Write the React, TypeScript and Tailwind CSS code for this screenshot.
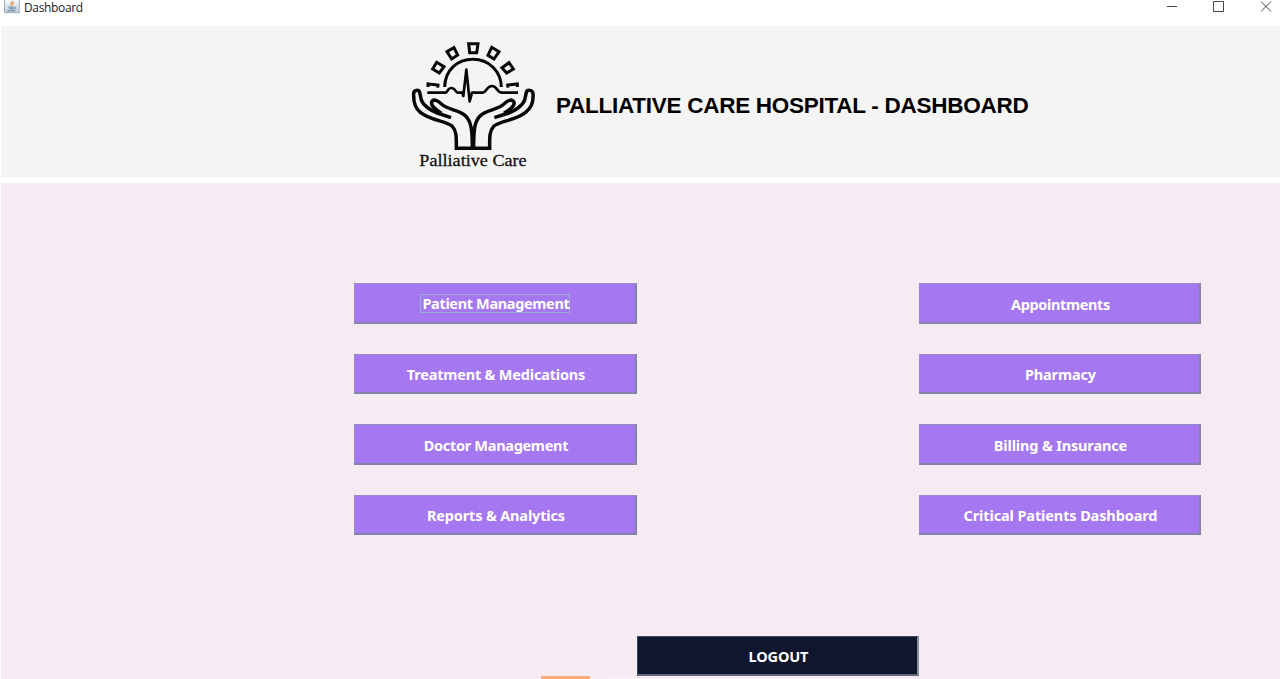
import React from "react";

function JavaIcon() {
  return (
    <svg width="17" height="17" viewBox="0 0 17 17" className="shrink-0">
      <defs>
        <linearGradient id="tile" x1="0" y1="0" x2="0" y2="1">
          <stop offset="0" stopColor="#fafbfc" />
          <stop offset="1" stopColor="#c0cddb" />
        </linearGradient>
      </defs>
      <path d="M1.5 -1V12.6H16.2V-1Z" fill="url(#tile)" stroke="#9eabb8" strokeWidth="1" />
      <path d="M9.5 0.8C10 2.4 7.1 3 7.8 4.5C8.2 5.3 8.8 5.2 8.6 6.2M11 2.5C9.3 3.3 9 4.2 9.8 5.5" fill="none" stroke="#e29a62" strokeWidth="1.2" />
      <path d="M5.3 7.2H11.5M5.8 8.8H11M4.5 10.7H12.5M11.7 7.2C13.8 6.9 13.4 8.7 11.5 9" fill="none" stroke="#6685a8" strokeWidth="1" />
    </svg>
  );
}

function Logo() {
  return (
    <svg width="150" height="150" viewBox="0 0 450 450" className="shrink-0">
      <g fill="none" stroke="#080808" strokeWidth="9" strokeLinejoin="miter">
        <path d="M206 41L234 41L230 68L209 68Z" />
        <path d="M141 65L162 53L173 75L155 87Z" />
        <path d="M275 52L297 65L282 87L264 76Z" />
        <path d="M110 97L132 110L118 129L98 117Z" />
        <path d="M327 98L340 117L320 129L306 113Z" />
        <path d="M84 171L84 162L114 165L113 173" />
        <path d="M352 171L352 162L323 165L324 173" />
        <path d="M134 171C135 121 171 88 219 88C267 88 303 124 304 171" />
        <path d="M82 188H137C143 188 142 174 154 174C167 174 166 188 173 188H187L190 198L199 119L209 214L216 188H248C259 188 260 168 276 168C291 168 292 188 304 188H354" strokeWidth="8" strokeLinejoin="round" />
        <path d="M153 263L112 249C93 242 70 227 64 210L59 187C56 178 41 179 41 191C40 215 45 235 61 247C94 273 139 272 157 289C171 304 169 327 169 355H269C269 327 267 304 281 289C299 272 344 273 377 247C393 235 401 215 399 191C398 179 382 178 379 187L374 210C368 227 345 242 326 249L283 263" strokeWidth="10.5" />
        <path d="M124 250C106 239 92 225 95 216C100 205 115 212 123 221C142 241 177 238 197 258C214 275 217 301 217 355M312 250C331 239 345 225 342 216C336 205 321 212 313 221C294 241 260 238 240 258C223 275 221 301 221 355" strokeWidth="10.5" />
      </g>
      <text x="58" y="409" fontSize="49" textLength="322" lengthAdjust="spacingAndGlyphs" fontFamily="'Liberation Serif', serif" fill="#111" stroke="#111" strokeWidth="0.8">Palliative Care</text>
    </svg>
  );
}

type Item = { label: string; tracking: string };

function MenuButton({ label, tracking, focused = false }: Item & { focused?: boolean }) {
  return (
    <button className="flex h-[40.5px] items-center justify-center border border-r-2 border-b-2 border-[#938cc4] border-r-[#8582aa] border-b-[#8582aa] bg-[#a577f0] pl-[2px] pt-[1.5px] text-[14.5px] font-bold leading-[18px] text-white">
      <span className={`${tracking} ${focused ? "-ml-px border border-[#9baed2] pl-px leading-[17px]" : ""}`}>{label}</span>
    </button>
  );
}

const ITEMS: Item[] = [
  { label: "Patient Management", tracking: "tracking-[-0.35px]" },
  { label: "Appointments", tracking: "tracking-[-0.37px]" },
  { label: "Treatment & Medications", tracking: "tracking-[-0.19px]" },
  { label: "Pharmacy", tracking: "tracking-[-0.14px]" },
  { label: "Doctor Management", tracking: "tracking-[-0.3px]" },
  { label: "Billing & Insurance", tracking: "tracking-[-0.16px]" },
  { label: "Reports & Analytics", tracking: "tracking-[-0.16px]" },
  { label: "Critical Patients Dashboard", tracking: "tracking-[-0.12px]" },
];

export default function App() {
  return (
    <div className="flex h-[679px] w-[1280px] flex-col overflow-hidden bg-white font-['Noto_Sans','Open_Sans',sans-serif]">
      <header className="flex h-[26px] shrink-0 items-start justify-between pl-[3px]">
        <div className="flex items-start gap-[4px]">
          <JavaIcon />
          <span className="font-['Open_Sans',sans-serif] text-[12px] leading-[15px] tracking-[-0.35px] text-[#222]">Dashboard</span>
        </div>
        <svg width="120" height="16" viewBox="0 0 120 16" fill="none" stroke="#444" strokeWidth="1">
          <path d="M7 6.5H17M53.5 1.5H63.5V11.5H53.5ZM101 1.5L111 11.5M111 1.5L101 11.5" />
        </svg>
      </header>
      <section className="ml-px flex h-[151px] shrink-0 items-start bg-[#f4f4f4] pl-[399px] pt-[4px]">
        <Logo />
        <h1 className="ml-[6px] mt-[62px] whitespace-nowrap font-['Liberation_Sans',sans-serif] text-[22.5px] font-bold leading-[28px] tracking-[-0.27px] text-black">
          PALLIATIVE CARE HOSPITAL - DASHBOARD
        </h1>
      </section>
      <main className="ml-px mt-[6px] flex flex-1 flex-col bg-[#f6eaf3] pt-[100.2px]">
        <div className="ml-[353.2px] grid w-[847px] grid-cols-[282.5px_282.5px] justify-between gap-y-[30px]">
          {ITEMS.map((item, i) => (
            <MenuButton key={item.label} label={item.label} tracking={item.tracking} focused={i === 0} />
          ))}
        </div>
        <button className="ml-[635.7px] mt-[100.5px] flex h-[40.5px] w-[282.5px] shrink-0 items-center justify-center border border-r-2 border-b-2 border-[#3d4860] border-r-[#8591a0] border-b-[#5d697b] bg-[#10162d] pl-[2px] pt-[1.5px] text-[14.5px] font-bold leading-[18px] tracking-[-0.15px] text-white">
          LOGOUT
        </button>
        <div className="ml-[540px] mt-auto flex h-[3px] items-end gap-[17px]">
          <div className="h-[3px] w-[49px] bg-[#fbab7b]" />
          <div className="h-[2px] w-[30px] bg-[#faf2f7]" />
        </div>
      </main>
    </div>
  );
}
